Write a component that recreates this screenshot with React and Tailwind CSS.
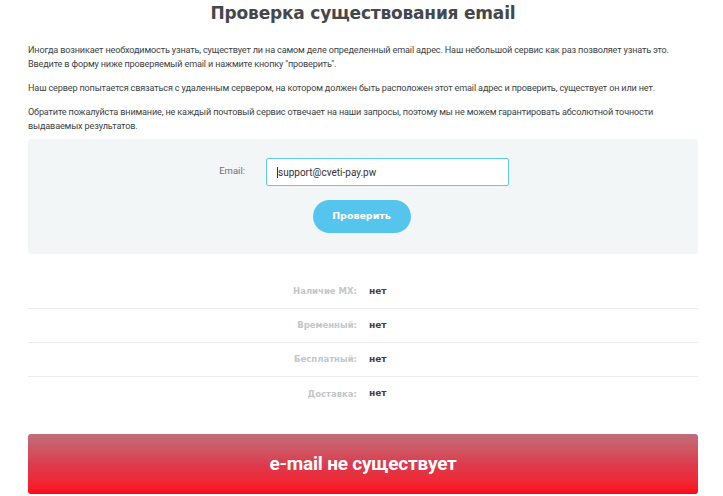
export default function App() {
  const rows = [
    ["Наличие MX:", "нет"],
    ["Временный:", "нет"],
    ["Бесплатный:", "нет"],
    ["Доставка:", "нет"],
  ];
  return (
    <div className="w-[723px] h-[496px] bg-white overflow-hidden" style={{ fontFamily: "Roboto, 'Noto Sans', sans-serif" }}>
      <div className="px-[28px] pr-[25px]">
        <h1 className="text-center pt-[1px] text-[17px] leading-[24px] font-bold text-[#44474c] tracking-[-0.2px]" style={{ fontFamily: "'DejaVu Sans', sans-serif" }}>
          Проверка существования email
        </h1>
        <div className="mt-[18px] text-[9.1px] leading-[14px] text-[#3b3f44] tracking-[-0.15px]">
          <p>Иногда возникает необходимость узнать, существует ли на самом деле определенный email адрес. Наш небольшой сервис как раз позволяет узнать это.<br />Введите в форму ниже проверяемый email и нажмите кнопку "проверить".</p>
          <p className="mt-[10px]">Наш сервер попытается связаться с удаленным сервером, на котором должен быть расположен этот email адрес и проверить, существует он или нет.</p>
          <p className="mt-[10px]">Обратите пожалуйста внимание, не каждый почтовый сервис отвечает на наши запросы, поэтому мы не можем гарантировать абсолютной точности<br />выдаваемых результатов.</p>
        </div>
        <div className="mt-[6px] h-[115px] bg-[#f3f6f7] rounded-[3px] flex flex-col items-center pt-[19px]">
          <div className="flex items-center">
            <span className="w-[217px] text-right pr-[21px] text-[9.5px] text-[#6d7075] -mt-[2px]">Email:</span>
            <div className="w-[243px] h-[28px] bg-white border border-[#5ec8ef] rounded-[2px] flex items-center pl-[10px] text-[10px] text-[#333]">
              <span className="w-px h-[11px] bg-[#333]"></span>support@cveti-pay.pw
            </div>
            <span className="w-[168px]"></span>
          </div>
          <button className="mt-[14px] w-[98px] h-[33px] rounded-full bg-[#56c5ed] text-white text-[9.5px] font-bold -ml-[3px]" style={{ fontFamily: "'DejaVu Sans', sans-serif" }}>
            Проверить
          </button>
        </div>
        <div className="mt-[21px]" style={{ fontFamily: "'DejaVu Sans', sans-serif" }}>
          {rows.map(([k, v], i) => (
            <div key={i} className={`flex items-center h-[34px] ${i < 3 ? "border-b border-[#ececec]" : ""}`}>
              <span className="w-[329px] text-right text-[8.5px] font-bold text-[#c4c6c9]">{k}</span>
              <span className="ml-[12px] text-[9px] font-bold text-[#3d4046]">{v}</span>
            </div>
          ))}
        </div>
        <div className="mt-[23px] h-[60px] rounded-[3px] bg-gradient-to-b from-[#c06c7a] via-[#db3a4d] to-[#ff0416] flex items-center justify-center">
          <span className="text-white text-[19px] font-bold tracking-[-0.2px]" style={{ fontFamily: "Roboto, sans-serif" }}>e-mail не существует</span>
        </div>
      </div>
    </div>
  );
}
